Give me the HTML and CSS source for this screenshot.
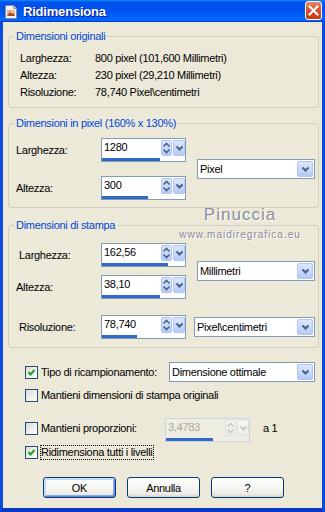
FILE: index.html
```html
<!DOCTYPE html>
<html lang="it">
<head>
  <meta charset="UTF-8">
  <meta name="viewport" content="width=device-width, initial-scale=1.0">
  <title>Ridimensiona</title>
  <link rel="stylesheet" href="styles.css">
</head>
<body>
  <div class="window">
    <div class="titlebar">
      <svg class="app-icon" width="16" height="16" viewBox="0 0 16 16">
        <path d="M2.5 1.5h8l3 3v10h-11z" fill="#f4f4f4" stroke="#8a8a8a"/>
        <path d="M10.5 1.5v3h3" fill="#dcdcdc" stroke="#8a8a8a"/>
        <rect x="4" y="6" width="8" height="6" fill="#e2b08c"/>
        <path d="M4 12l3-4 2 2 1-1 2 3z" fill="#b0452a"/>
        <circle cx="10" cy="7.6" r="1" fill="#f5e27a"/>
      </svg>
      <span class="title">Ridimensiona</span>
      <span class="close">
        <svg width="11" height="11" viewBox="0 0 11 11">
          <path d="M1.5 1.5l8 8M9.5 1.5l-8 8" stroke="#fff" stroke-width="2" stroke-linecap="square"/>
        </svg>
      </span>
    </div>

    <div class="client">
      <fieldset class="group group-orig">
        <legend>Dimensioni originali</legend>
        <div class="info">
          <span>Larghezza:</span><span>800 pixel (101,600 Millimetri)</span>
          <span>Altezza:</span><span>230 pixel (29,210 Millimetri)</span>
          <span>Risoluzione:</span><span>78,740 Pixel\centimetri</span>
        </div>
      </fieldset>

      <fieldset class="group group-pixel">
        <legend>Dimensioni in pixel (160% x 130%)</legend>
        <div class="pair">
          <div class="stack stack-wide">
            <div class="field">
              <span class="field-label">Larghezza:</span>
              <div class="spin">
                <div class="spin-top">
                  <span class="spin-value">1280</span>
                  <span class="spin-btn"><svg width="9" height="14" viewBox="0 0 9 14"><path d="M1.5 5.5l3-3 3 3M1.5 8.5l3 3 3-3" fill="none" stroke="#4d6185" stroke-width="1.6"/></svg></span>
                  <span class="spin-btn spin-drop"><svg width="9" height="7" viewBox="0 0 9 7"><path d="M1.5 1.5l3 3 3-3" fill="none" stroke="#4d6185" stroke-width="2"/></svg></span>
                </div>
                <div class="spin-bar"><div class="spin-fill" style="width:70%"></div></div>
              </div>
            </div>
            <div class="field">
              <span class="field-label">Altezza:</span>
              <div class="spin">
                <div class="spin-top">
                  <span class="spin-value">300</span>
                  <span class="spin-btn"><svg width="9" height="14" viewBox="0 0 9 14"><path d="M1.5 5.5l3-3 3 3M1.5 8.5l3 3 3-3" fill="none" stroke="#4d6185" stroke-width="1.6"/></svg></span>
                  <span class="spin-btn spin-drop"><svg width="9" height="7" viewBox="0 0 9 7"><path d="M1.5 1.5l3 3 3-3" fill="none" stroke="#4d6185" stroke-width="2"/></svg></span>
                </div>
                <div class="spin-bar"><div class="spin-fill" style="width:55%"></div></div>
              </div>
            </div>
          </div>
          <div class="combo combo-unit">
            <span class="combo-text">Pixel</span>
            <span class="combo-btn"><svg width="9" height="7" viewBox="0 0 9 7"><path d="M1.5 1.5l3 3 3-3" fill="none" stroke="#4d6185" stroke-width="2"/></svg></span>
          </div>
        </div>
      </fieldset>

      <fieldset class="group group-print">
        <legend>Dimensioni di stampa</legend>
        <div class="pair">
          <div class="stack">
            <div class="field">
              <span class="field-label indent">Larghezza:</span>
              <div class="spin">
                <div class="spin-top">
                  <span class="spin-value">162,56</span>
                  <span class="spin-btn"><svg width="9" height="14" viewBox="0 0 9 14"><path d="M1.5 5.5l3-3 3 3M1.5 8.5l3 3 3-3" fill="none" stroke="#4d6185" stroke-width="1.6"/></svg></span>
                  <span class="spin-btn spin-drop"><svg width="9" height="7" viewBox="0 0 9 7"><path d="M1.5 1.5l3 3 3-3" fill="none" stroke="#4d6185" stroke-width="2"/></svg></span>
                </div>
                <div class="spin-bar"><div class="spin-fill" style="width:80%"></div></div>
              </div>
            </div>
            <div class="field">
              <span class="field-label">Altezza:</span>
              <div class="spin">
                <div class="spin-top">
                  <span class="spin-value">38,10</span>
                  <span class="spin-btn"><svg width="9" height="14" viewBox="0 0 9 14"><path d="M1.5 5.5l3-3 3 3M1.5 8.5l3 3 3-3" fill="none" stroke="#4d6185" stroke-width="1.6"/></svg></span>
                  <span class="spin-btn spin-drop"><svg width="9" height="7" viewBox="0 0 9 7"><path d="M1.5 1.5l3 3 3-3" fill="none" stroke="#4d6185" stroke-width="2"/></svg></span>
                </div>
                <div class="spin-bar"><div class="spin-fill" style="width:70%"></div></div>
              </div>
            </div>
          </div>
          <div class="combo combo-unit">
            <span class="combo-text">Millimetri</span>
            <span class="combo-btn"><svg width="9" height="7" viewBox="0 0 9 7"><path d="M1.5 1.5l3 3 3-3" fill="none" stroke="#4d6185" stroke-width="2"/></svg></span>
          </div>
        </div>
        <div class="pair pair-res">
          <div class="field">
            <span class="field-label indent">Risoluzione:</span>
            <div class="spin">
              <div class="spin-top">
                <span class="spin-value">78,740</span>
                <span class="spin-btn"><svg width="9" height="14" viewBox="0 0 9 14"><path d="M1.5 5.5l3-3 3 3M1.5 8.5l3 3 3-3" fill="none" stroke="#4d6185" stroke-width="1.6"/></svg></span>
                <span class="spin-btn spin-drop"><svg width="9" height="7" viewBox="0 0 9 7"><path d="M1.5 1.5l3 3 3-3" fill="none" stroke="#4d6185" stroke-width="2"/></svg></span>
              </div>
              <div class="spin-bar"><div class="spin-fill" style="width:42%"></div></div>
            </div>
          </div>
          <div class="combo combo-res">
            <span class="combo-text">Pixel\centimetri</span>
            <span class="combo-btn"><svg width="9" height="7" viewBox="0 0 9 7"><path d="M1.5 1.5l3 3 3-3" fill="none" stroke="#4d6185" stroke-width="2"/></svg></span>
          </div>
        </div>
      </fieldset>

      <div class="opt opt-resample">
        <span class="check"><svg width="9" height="9" viewBox="0 0 9 9"><path d="M1.5 4.2l2 2.2 4-4.4" fill="none" stroke="#21a121" stroke-width="2"/></svg></span>
        <span class="opt-label label-resample">Tipo di ricampionamento:</span>
        <div class="combo combo-method">
          <span class="combo-text">Dimensione ottimale</span>
          <span class="combo-btn"><svg width="9" height="7" viewBox="0 0 9 7"><path d="M1.5 1.5l3 3 3-3" fill="none" stroke="#4d6185" stroke-width="2"/></svg></span>
        </div>
      </div>

      <div class="opt opt-keep">
        <span class="check"></span>
        <span class="opt-label">Mantieni dimensioni di stampa originali</span>
      </div>

      <div class="opt opt-ratio">
        <span class="check"></span>
        <span class="opt-label label-ratio">Mantieni proporzioni:</span>
        <div class="spin spin-disabled">
          <div class="spin-top">
            <span class="spin-value">3,4783</span>
            <span class="spin-btn"><svg width="9" height="14" viewBox="0 0 9 14"><path d="M1.5 5.5l3-3 3 3M1.5 8.5l3 3 3-3" fill="none" stroke="#c9c9c2" stroke-width="1.6"/></svg></span>
            <span class="spin-btn spin-drop"><svg width="9" height="7" viewBox="0 0 9 7"><path d="M1.5 1.5l3 3 3-3" fill="none" stroke="#c9c9c2" stroke-width="2"/></svg></span>
          </div>
          <div class="spin-bar"><div class="spin-fill" style="width:57%"></div></div>
        </div>
        <span class="ratio-suffix">a 1</span>
      </div>

      <div class="opt opt-layers">
        <span class="check"><svg width="9" height="9" viewBox="0 0 9 9"><path d="M1.5 4.2l2 2.2 4-4.4" fill="none" stroke="#21a121" stroke-width="2"/></svg></span>
        <span class="opt-label focus">Ridimensiona tutti i livelli</span>
      </div>

      <div class="actions">
        <button class="btn btn-default">OK</button>
        <button class="btn">Annulla</button>
        <button class="btn">?</button>
      </div>
    </div>

    <div class="watermark">
      <span class="wm-name">Pinuccia</span>
      <span class="wm-site">www.maidiregrafica.eu</span>
    </div>
  </div>
</body>
</html>
```

FILE: styles.css
```css
* {
  box-sizing: border-box;
  margin: 0;
  padding: 0;
}

body {
  font-family: "Liberation Sans", Arial, sans-serif;
  font-size: 11px;
  letter-spacing: -0.3px;
  color: #000;
  background: #ECE9D8;
}

.window {
  position: relative;
  width: 325px;
  height: 512px;
  display: flex;
  flex-direction: column;
  overflow: hidden;
}

/* title bar */
.titlebar {
  height: 22px;
  flex: none;
  display: flex;
  align-items: center;
  padding: 0 3px;
  background: linear-gradient(180deg, #0997FF 0%, #0053EE 8%, #0050EE 40%, #0066FF 88%, #0066FF 93%, #005BFF 95%, #003DD7 96%, #003DD7 100%);
}

.app-icon {
  flex: none;
  margin-top: 1px;
}

.title {
  margin-left: 4px;
  color: #fff;
  font-weight: bold;
  font-size: 13px;
  letter-spacing: -0.2px;
  text-shadow: 1px 1px 0 #0F1089;
}

.close {
  margin-left: auto;
  align-self: flex-start;
  margin-top: 1px;
  width: 17px;
  height: 19px;
  border: 1px solid #fff;
  border-radius: 3px;
  background: linear-gradient(180deg, #E8896C 0%, #D9542D 45%, #C73A15 100%);
  display: flex;
  align-items: center;
  justify-content: center;
}

/* client area */
.client {
  flex: 1;
  display: flex;
  flex-direction: column;
  border-left: 3px solid #0A4BDA;
  border-right: 3px solid #0A4BDA;
  border-bottom: 4px solid #0838C8;
  background: #ECE9D8;
}

.group {
  min-width: 0;
  margin: 0 3px 0 5px;
  padding: 0 3px 7px 5px;
  border: 1px solid #D0D0BF;
  border-radius: 3px;
}

.group legend {
  padding: 0 2px;
  line-height: 13px;
  color: #0046D5;
}

.group-orig {
  margin-top: 8px;
}

.group-pixel {
  margin-top: 9px;
}

.group-print {
  margin-top: 11px;
  padding-bottom: 8px;
}

.info {
  display: grid;
  grid-template-columns: 75px 1fr;
  grid-auto-rows: 16px;
  row-gap: 1px;
  padding: 7px 0 0 6px;
  line-height: 16px;
}

.pair {
  display: flex;
  align-items: center;
}

.group-pixel .pair {
  padding-top: 8px;
}

.group-print .pair {
  padding-top: 11px;
}

.group-print .pair-res {
  padding-top: 16px;
}

.stack {
  display: flex;
  flex-direction: column;
  gap: 8px;
}

.stack-wide {
  gap: 14px;
}

.field {
  display: flex;
  align-items: center;
}

.field-label {
  width: 87px;
  padding-left: 2px;
}

.field-label.indent {
  padding-left: 5px;
}

/* spin box */
.spin {
  flex: none;
  width: 85px;
  height: 24px;
  border: 1px solid #7F9DB9;
  background: #fff;
  display: flex;
  flex-direction: column;
}

.spin-top {
  height: 18px;
  display: flex;
  align-items: flex-start;
}

.spin-value {
  flex: 1;
  padding-left: 2px;
  line-height: 16px;
}

.spin-btn {
  flex: none;
  width: 11px;
  height: 16px;
  margin-top: 1px;
  border: 1px solid #B2C5F4;
  border-radius: 2px;
  background: linear-gradient(180deg, #DCE7FD 0%, #C4D6FA 60%, #B4C9F6 100%);
  display: flex;
  align-items: center;
  justify-content: center;
}

.spin-drop {
  width: 12px;
  margin-left: 1px;
}

.spin-bar {
  height: 3px;
  margin-top: 1px;
}

.spin-fill {
  height: 3px;
  background: #316AC5;
}

.spin-disabled {
  border-color: #C9D3E2;
  background: #EFEDE2;
  color: #ACA899;
}

.spin-disabled .spin-btn {
  border-color: #E2E2DA;
  background: linear-gradient(180deg, #F6F6F2 0%, #ECECE6 100%);
}

/* combo box */
.combo {
  flex: none;
  height: 20px;
  border: 1px solid #7F9DB9;
  background: #fff;
  display: flex;
  align-items: center;
  padding: 0 1px 0 2px;
}

.combo-text {
  flex: 1;
  line-height: 16px;
  white-space: nowrap;
}

.combo-btn {
  flex: none;
  width: 16px;
  height: 16px;
  border: 1px solid #B2C5F4;
  border-radius: 2px;
  background: linear-gradient(180deg, #DCE7FD 0%, #C4D6FA 60%, #B4C9F6 100%);
  display: flex;
  align-items: center;
  justify-content: center;
}

.combo-unit {
  width: 118px;
  margin-left: 11px;
}

.combo-res {
  width: 121px;
  margin-left: 8px;
}

.combo-method {
  width: 146px;
}

/* options */
.opt {
  display: flex;
  align-items: center;
  padding-left: 22px;
}

.check {
  flex: none;
  width: 13px;
  height: 13px;
  border: 1px solid #1C5180;
  background: linear-gradient(135deg, #DCDCD7 0%, #FFFFFF 100%);
  display: flex;
  align-items: center;
  justify-content: center;
}

.opt-label {
  margin-left: 3px;
  line-height: 14px;
  white-space: nowrap;
}

.opt-resample {
  margin-top: 14px;
  height: 20px;
}

.label-resample {
  width: 128px;
}

.opt-keep {
  margin-top: 6px;
  height: 14px;
}

.opt-ratio {
  margin-top: 16px;
  height: 24px;
  align-items: flex-start;
}

.opt-ratio .check {
  margin-top: 4px;
}

.label-ratio {
  width: 124px;
  margin-top: 3px;
}

.ratio-suffix {
  margin-left: 13px;
  margin-top: 3px;
  line-height: 14px;
}

.opt-layers {
  margin-top: 3px;
  height: 15px;
}

.opt-label.focus {
  margin-left: 2px;
  padding-right: 1px;
  line-height: 13px;
  border: 1px dotted #000;
}

/* buttons */
.actions {
  display: flex;
  gap: 11px;
  padding-left: 40px;
  margin-top: 17px;
}

.btn {
  width: 73px;
  height: 21px;
  border: 1px solid #003C74;
  border-radius: 3px;
  background: linear-gradient(180deg, #FFFFFF 0%, #F4F4F0 55%, #ECEBE6 85%, #D6D0C5 100%);
  font-family: inherit;
  font-size: 11px;
  letter-spacing: -0.3px;
  color: #000;
}

.btn-default {
  box-shadow: inset 1px 1px 0 #CEE7FF, inset -1px -1px 0 #6982EE, inset 2px 2px 0 #BCD4F6, inset -2px -2px 0 #89ADE4;
}

/* watermark laid over the dialog */
.watermark {
  position: absolute;
  left: 178px;
  top: 205px;
  width: 124px;
  display: flex;
  flex-direction: column;
  align-items: center;
  pointer-events: none;
}

.wm-name {
  font-size: 17px;
  line-height: 20px;
  letter-spacing: 1px;
  color: #8C8CA0;
  text-shadow: 1px 1px 0 #fff;
}

.wm-site {
  margin-top: 4px;
  font-size: 10px;
  line-height: 12px;
  letter-spacing: 1px;
  color: #8A8A9A;
  text-shadow: 1px 1px 0 #fff;
}
```
